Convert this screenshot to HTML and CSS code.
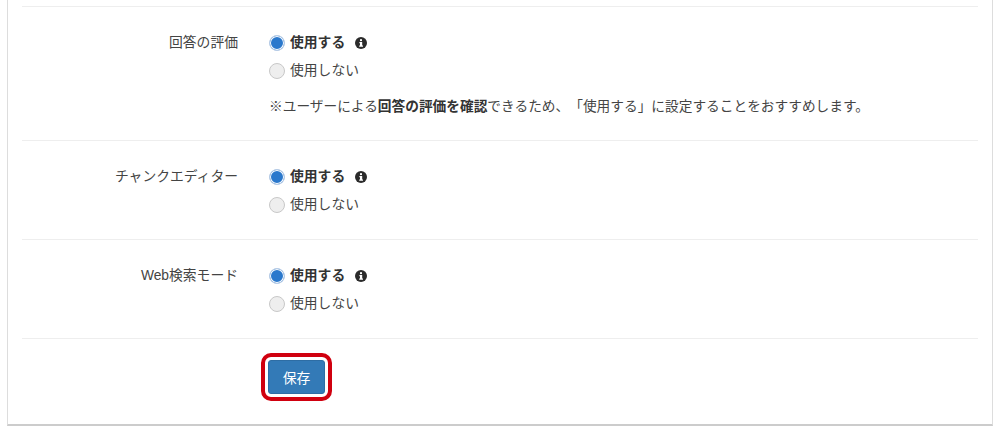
FILE: index.html
```html
<!DOCTYPE html>
<html lang="ja">
<head>
    <meta charset="UTF-8">
    <title>設定</title>
    <link rel="stylesheet" href="styles.css">
</head>
<body>
    <div class="panel">
        <form class="settings">
            <div class="form-row first">
                <div class="form-label">回答の評価</div>
                <div class="form-field">
                    <label class="radio on"><span class="radio-mark"></span><b>使用する</b>
                        <svg class="info" viewBox="0 0 12 12"><circle cx="6" cy="6" r="6"/><rect x="5" y="2.2" width="2" height="1.9" fill="#fff"/><path d="M4.4 5h2.8v3.6h.8v1.2H4.2V8.6H5V6.2h-.6z" fill="#fff"/></svg>
                    </label>
                    <label class="radio"><span class="radio-mark"></span>使用しない</label>
                    <p class="note">※ユーザーによる<b>回答の評価を確認</b>できるため、「使用する」に設定することをおすすめします。</p>
                </div>
            </div>
            <div class="form-row">
                <div class="form-label">チャンクエディター</div>
                <div class="form-field">
                    <label class="radio on"><span class="radio-mark"></span><b>使用する</b>
                        <svg class="info" viewBox="0 0 12 12"><circle cx="6" cy="6" r="6"/><rect x="5" y="2.2" width="2" height="1.9" fill="#fff"/><path d="M4.4 5h2.8v3.6h.8v1.2H4.2V8.6H5V6.2h-.6z" fill="#fff"/></svg>
                    </label>
                    <label class="radio"><span class="radio-mark"></span>使用しない</label>
                </div>
            </div>
            <div class="form-row">
                <div class="form-label">Web検索モード</div>
                <div class="form-field">
                    <label class="radio on"><span class="radio-mark"></span><b>使用する</b>
                        <svg class="info" viewBox="0 0 12 12"><circle cx="6" cy="6" r="6"/><rect x="5" y="2.2" width="2" height="1.9" fill="#fff"/><path d="M4.4 5h2.8v3.6h.8v1.2H4.2V8.6H5V6.2h-.6z" fill="#fff"/></svg>
                    </label>
                    <label class="radio"><span class="radio-mark"></span>使用しない</label>
                </div>
            </div>
            <div class="form-row actions">
                <div class="form-label"></div>
                <div class="form-field">
                    <span class="highlight"><button type="button" class="save-btn">保存</button></span>
                </div>
            </div>
        </form>
    </div>
</body>
</html>
```

FILE: styles.css
```css
* {
    margin: 0;
    padding: 0;
    box-sizing: border-box;
}

html, body {
    height: 431px;
    overflow: hidden;
}

body {
    font-family: "Liberation Sans", "Noto Sans CJK JP", sans-serif;
    font-size: 13.8px;
    color: #444;
    background: #fff;
}

.panel {
    height: 426px;
    margin: 0 7px;
    padding: 6px 14px 0;
    background: #fff;
    border-left: 1px solid #ddd;
    border-right: 1px solid #ddd;
    border-bottom: 2px solid #ccc;
}

.form-row {
    display: flex;
    border-top: 1px solid #eee;
    padding-top: 26px;
    height: 99px;
}

.form-row.first {
    height: 134px;
}

.form-row.actions {
    height: auto;
    padding-top: 14px;
}

.form-label {
    width: 216px;
    text-align: right;
    line-height: 20px;
    flex-shrink: 0;
}

.form-field {
    margin-left: 31px;
}

.radio {
    display: flex;
    align-items: center;
    height: 20px;
    margin-bottom: 8px;
    line-height: 20px;
}

.radio b {
    color: #333;
}

.radio-mark {
    width: 16px;
    height: 16px;
    margin-right: 5px;
    border-radius: 50%;
    background: #eee;
    border: 1px solid #c8c8c8;
}

.radio.on .radio-mark {
    background: #2a78cc;
    border: 1px solid #b9cde6;
    box-shadow: inset 0 0 0 1px #fff;
}

.info {
    width: 12px;
    height: 12px;
    margin-left: 10px;
    fill: #2b2b2b;
}

.note {
    margin-top: 16px;
    font-size: 13.7px;
    line-height: 20px;
    text-spacing-trim: space-all;
}

.note b {
    color: #333;
}

.highlight {
    display: inline-block;
    margin-left: -8px;
    padding: 3px;
    border: 4px solid #d0000f;
    border-radius: 10px;
}

.save-btn {
    display: block;
    width: 57px;
    height: 34px;
    font-family: inherit;
    font-size: 13.8px;
    color: #fff;
    background: #337ab7;
    border: 1px solid #2e6da4;
    border-radius: 3px;
}
```
